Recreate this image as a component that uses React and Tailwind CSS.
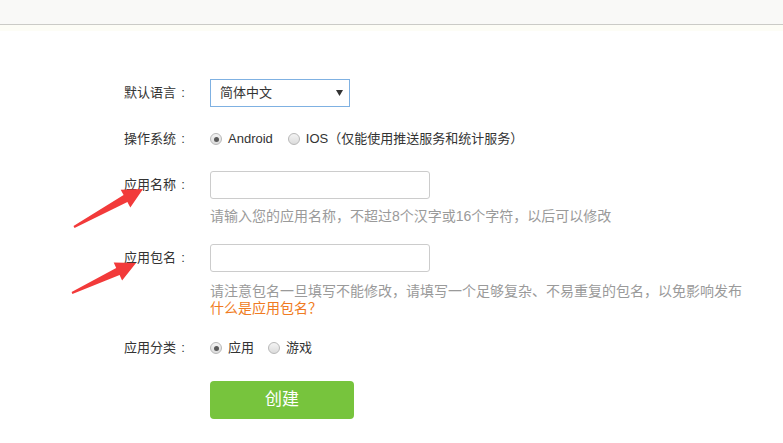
import React from "react";

function Radio({ checked }) {
  return (
    <span className="w-[12px] h-[12px] rounded-full border border-[#b8b8b8] bg-gradient-to-b from-[#f4f4f4] to-[#dcdcdc] flex items-center justify-center shrink-0">
      {checked ? <span className="w-[5px] h-[5px] rounded-full bg-[#5a5a5a]" /> : null}
    </span>
  );
}

function Label({ children }) {
  return (
    <div className="w-[190px] shrink-0 flex justify-end text-[13px] leading-[20px] text-[#333333]">
      <span>{children}</span>
      <span className="w-[14px] text-center">:</span>
    </div>
  );
}

export default function App() {
  return (
    <div
      className="w-[783px] h-[443px] relative overflow-hidden bg-white"
      style={{ fontFamily: '"Liberation Sans", "Noto Sans CJK SC", sans-serif' }}
    >
      <div className="h-[25px] bg-[#f9f9f7] border-b border-[#cbcbc7]" />
      <div className="h-[6px] bg-[#fdfdf6]" />

      <div className="flex flex-col">
        {/* Row 1 */}
        <div className="mt-[48px] h-[28px] flex items-center">
          <Label>默认语言</Label>
          <div className="ml-[20px] w-[140px] h-[28px] border border-[#7fb1e2] flex items-center justify-between pl-[9px] pr-[6px] text-[13px] text-[#333333]">
            <span>简体中文</span>
            <svg width="7" height="6" viewBox="0 0 7 6">
              <polygon points="0,0 7,0 3.5,6" fill="#333" />
            </svg>
          </div>
        </div>

        {/* Row 2 */}
        <div className="mt-[22px] h-[20px] flex items-center">
          <Label>操作系统</Label>
          <div className="ml-[20px] flex items-center text-[13px] text-[#333333]">
            <Radio checked />
            <span className="ml-[6px]">Android</span>
            <span className="ml-[15px]"><Radio /></span>
            <span className="ml-[6px]">IOS（仅能使用推送服务和统计服务）</span>
          </div>
        </div>

        {/* Row 3 */}
        <div className="mt-[22px] h-[28px] flex items-center">
          <Label>应用名称</Label>
          <div className="ml-[20px] w-[220px] h-[28px] border border-[#cccccc] rounded-[3px] bg-white" />
        </div>
        <div className="mt-[9px] pl-[210px] text-[14px] leading-[17px] text-[#9a9a9a]">
          请输入您的应用名称，不超过8个汉字或16个字符，以后可以修改
        </div>

        {/* Row 4 */}
        <div className="mt-[19px] h-[28px] flex items-center">
          <Label>应用包名</Label>
          <div className="ml-[20px] w-[220px] h-[28px] border border-[#cccccc] rounded-[3px] bg-white" />
        </div>
        <div className="mt-[11px] pl-[210px] text-[14px] leading-[17px] text-[#9a9a9a]">
          <div>请注意包名一旦填写不能修改，请填写一个足够复杂、不易重复的包名，以免影响发布</div>
          <div className="text-[#f07b22]">什么是应用包名？</div>
        </div>

        {/* Row 5 */}
        <div className="mt-[21px] h-[20px] flex items-center">
          <Label>应用分类</Label>
          <div className="ml-[20px] flex items-center text-[13px] text-[#333333]">
            <Radio checked />
            <span className="ml-[6px]">应用</span>
            <span className="ml-[14px]"><Radio /></span>
            <span className="ml-[6px]">游戏</span>
          </div>
        </div>

        {/* Button */}
        <div className="mt-[23px] pl-[210px]">
          <button className="w-[144px] h-[38px] bg-[#77c43d] rounded-[4px] text-white text-[17px] flex items-center justify-center">
            创建
          </button>
        </div>
      </div>

      <svg className="absolute left-0 top-0 pointer-events-none" width="783" height="443" viewBox="0 0 783 443">
        <polygon
          points="73.5,226.1 123.6,195.1 120.7,189.8 143,189 130.3,207.4 127.4,202.1 74.5,227.9"
          fill="#f23a3a"
        />
        <polygon
          points="71.6,292.1 116.2,267.9 113.7,262.5 136,263 122.1,280.6 119.6,275.1 72.4,293.9"
          fill="#f23a3a"
        />
      </svg>
    </div>
  );
}
